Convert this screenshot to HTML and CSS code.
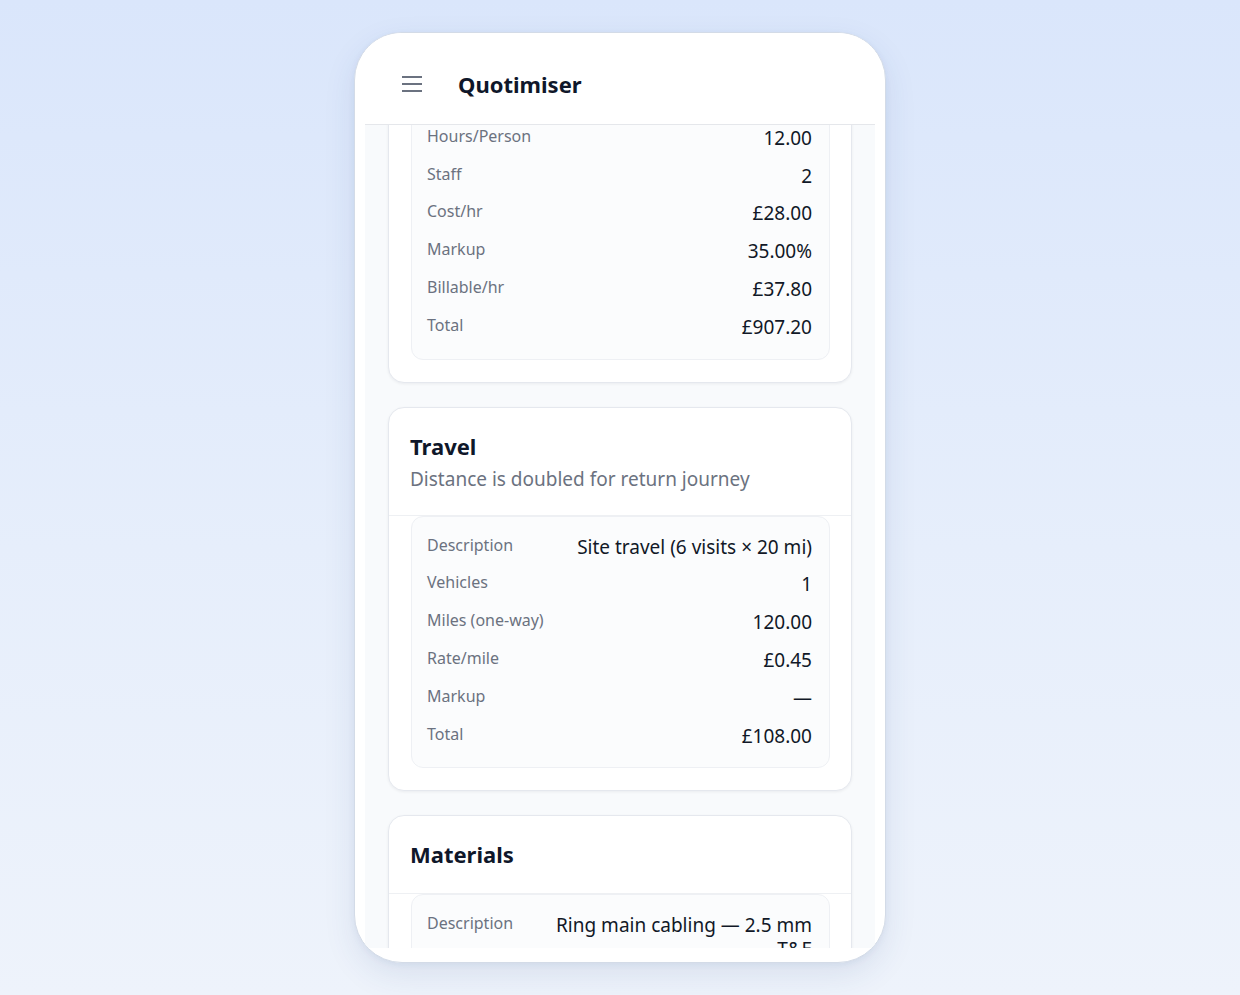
FILE: index.html
```html
<!DOCTYPE html>
<html lang="en">
<head>
<meta charset="utf-8">
<title>Quotimiser</title>
<link rel="stylesheet" href="styles.css">
</head>
<body>
<div class="phone">
  <div class="screen">
    <header class="topbar">
      <button class="menu" aria-label="Menu">
        <svg width="20" height="16" viewBox="0 0 20 16" aria-hidden="true">
          <path d="M0 1h20M0 8h20M0 15h20" stroke="#6b7280" stroke-width="2" fill="none"/>
        </svg>
      </button>
      <h1 class="brand">Quotimiser</h1>
    </header>
    <main class="viewport">
      <div class="feed">
        <section class="card">
          <div class="card-head">
            <h2 class="card-title">Labour</h2>
            <p class="card-sub">Hours are per person</p>
          </div>
          <div class="card-body">
            <div class="sheet">
              <div class="row"><span class="label">Description</span><span class="value">Electrician labour</span></div>
              <div class="row"><span class="label">Hours/Person</span><span class="value">12.00</span></div>
              <div class="row"><span class="label">Staff</span><span class="value">2</span></div>
              <div class="row"><span class="label">Cost/hr</span><span class="value">£28.00</span></div>
              <div class="row"><span class="label">Markup</span><span class="value">35.00%</span></div>
              <div class="row"><span class="label">Billable/hr</span><span class="value">£37.80</span></div>
              <div class="row"><span class="label">Total</span><span class="value">£907.20</span></div>
            </div>
          </div>
        </section>

        <section class="card">
          <div class="card-head">
            <h2 class="card-title">Travel</h2>
            <p class="card-sub">Distance is doubled for return journey</p>
          </div>
          <div class="card-body">
            <div class="sheet">
              <div class="row"><span class="label">Description</span><span class="value">Site travel (6 visits × 20 mi)</span></div>
              <div class="row"><span class="label">Vehicles</span><span class="value">1</span></div>
              <div class="row"><span class="label">Miles (one-way)</span><span class="value">120.00</span></div>
              <div class="row"><span class="label">Rate/mile</span><span class="value">£0.45</span></div>
              <div class="row"><span class="label">Markup</span><span class="value">—</span></div>
              <div class="row"><span class="label">Total</span><span class="value">£108.00</span></div>
            </div>
          </div>
        </section>

        <section class="card">
          <div class="card-head">
            <h2 class="card-title">Materials</h2>
          </div>
          <div class="card-body">
            <div class="sheet">
              <div class="row"><span class="label">Description</span><span class="value">Ring main cabling — 2.5 mm T&amp;E</span></div>
              <div class="row"><span class="label">Quantity</span><span class="value">100</span></div>
              <div class="row"><span class="label">Unit cost</span><span class="value">£0.85</span></div>
            </div>
          </div>
        </section>
      </div>
    </main>
  </div>
</div>
</body>
</html>
```

FILE: styles.css
```css
* { box-sizing: border-box; }

html, body {
  margin: 0;
  padding: 0;
}

body {
  height: 995px;
  padding-top: 32px;
  display: flex;
  align-items: flex-start;
  justify-content: center;
  background: linear-gradient(180deg, #dae6fb 0%, #e6eefb 55%, #eef3fb 100%);
  font-family: "Noto Sans", "Open Sans", sans-serif;
  color: #111827;
}

.phone {
  width: 532px;
  height: 931px;
  background: #ffffff;
  border: 1px solid #d3dbe7;
  border-radius: 48px;
  padding: 0 10px 14px;
  box-shadow: 0 12px 32px rgba(40, 70, 130, 0.10), 0 2px 6px rgba(40, 70, 130, 0.06);
  overflow: hidden;
}

.screen {
  height: 100%;
  display: flex;
  flex-direction: column;
  overflow: hidden;
}

.topbar {
  flex: 0 0 auto;
  height: 92px;
  padding: 10px 0 0 37px;
  display: flex;
  align-items: center;
  gap: 36px;
  background: #ffffff;
  border-bottom: 1px solid #e5e7eb;
}

.menu {
  border: 0;
  background: none;
  padding: 0;
  width: 20px;
  height: 16px;
  display: block;
}

.menu svg { display: block; }

.brand {
  margin: 0;
  font-size: 22px;
  line-height: 30px;
  font-weight: 700;
  color: #0f172a;
}

.viewport {
  flex: 1 1 auto;
  overflow: hidden;
  background: #f8fafc;
  padding: 0 23px;
}

.feed {
  margin-top: -165px;
  display: flex;
  flex-direction: column;
  gap: 24px;
}

.card {
  background: #ffffff;
  border: 1px solid #e5e8ee;
  border-radius: 16px;
  box-shadow: 0 1px 3px rgba(15, 23, 42, 0.06);
}

.card-head {
  padding: 21px 22px 22px 21px;
  border-bottom: 1px solid #eef0f3;
}

.card-title {
  margin: 0;
  font-size: 22px;
  line-height: 34px;
  font-weight: 700;
  color: #0f172a;
}

.card-sub {
  margin: 2px 0 0;
  font-size: 19px;
  line-height: 28px;
  color: #6b7280;
}

.card-body {
  padding: 0 21px 22px 22px;
}

.sheet {
  background: #fbfcfd;
  border: 1px solid #eef0f4;
  border-radius: 12px;
  padding: 10px 17px 14px 15px;
}

.row {
  display: flex;
  justify-content: space-between;
  align-items: flex-start;
  gap: 24px;
  padding: 5px 0;
}

.label {
  flex: 0 0 auto;
  padding-top: 1px;
  font-size: 16px;
  line-height: 24px;
  color: #6b7280;
}

.value {
  padding-top: 4px;
  font-size: 19px;
  line-height: 23.8px;
  color: #111827;
  text-align: right;
}
```
